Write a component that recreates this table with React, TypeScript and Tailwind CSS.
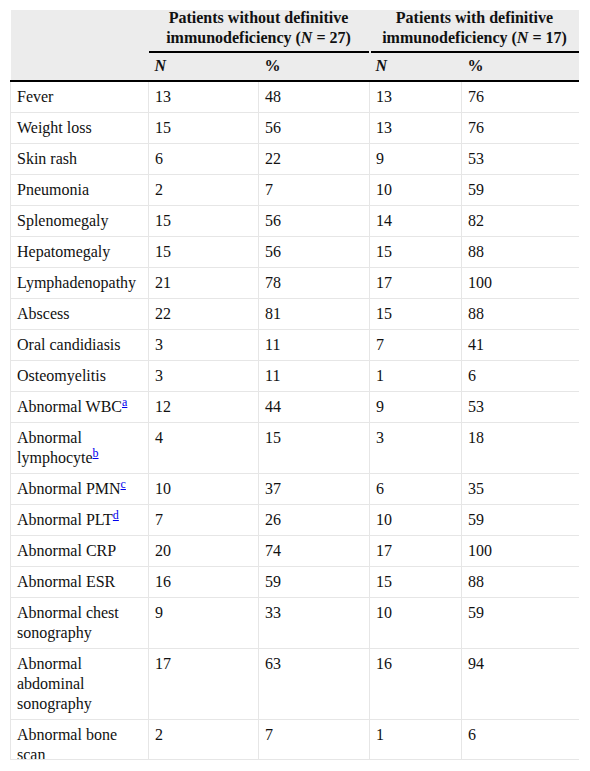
const rows: [string, string | null, string, string, string, string][] = [
  ["Fever", null, "13", "48", "13", "76"],
  ["Weight loss", null, "15", "56", "13", "76"],
  ["Skin rash", null, "6", "22", "9", "53"],
  ["Pneumonia", null, "2", "7", "10", "59"],
  ["Splenomegaly", null, "15", "56", "14", "82"],
  ["Hepatomegaly", null, "15", "56", "15", "88"],
  ["Lymphadenopathy", null, "21", "78", "17", "100"],
  ["Abscess", null, "22", "81", "15", "88"],
  ["Oral candidiasis", null, "3", "11", "7", "41"],
  ["Osteomyelitis", null, "3", "11", "1", "6"],
  ["Abnormal WBC", "a", "12", "44", "9", "53"],
  ["Abnormal lymphocyte", "b", "4", "15", "3", "18"],
  ["Abnormal PMN", "c", "10", "37", "6", "35"],
  ["Abnormal PLT", "d", "7", "26", "10", "59"],
  ["Abnormal CRP", null, "20", "74", "17", "100"],
  ["Abnormal ESR", null, "16", "59", "15", "88"],
  ["Abnormal chest sonography", null, "9", "33", "10", "59"],
  ["Abnormal abdominal sonography", null, "17", "63", "16", "94"],
  ["Abnormal bone scan", null, "2", "7", "1", "6"],
];

const td = "border border-t-0 border-[#e6e6e6] px-[6px] py-[5px] align-top";
const subTh = "px-[6px] pt-[3px] pb-[4px] text-left font-bold border-b-2 border-black";

export default function App() {
  return (
    <div className="bg-white min-h-[771px] pt-[10px] pl-[10px] font-['Liberation_Serif',serif] text-[16px] leading-[20px] text-[#111]">
      <div className="w-[569px] h-[750px] overflow-hidden border-b border-[#e6e6e6]">
        <table className="w-[569px] table-fixed border-collapse">
          <colgroup>
            <col className="w-[138px]" />
            <col className="w-[110px]" />
            <col className="w-[111px]" />
            <col className="w-[92px]" />
            <col className="w-[118px]" />
          </colgroup>
          <thead className="bg-[#ececec]">
            <tr>
              <th rowSpan={2} className="border-b-2 border-black"></th>
              <th colSpan={2} className="p-0 font-bold text-center align-top">
                <div className="-mt-[2px] pb-[3px] border-b-2 border-black mr-[1px]">
                  Patients without definitive immunodeficiency (<i>N</i> = 27)
                </div>
              </th>
              <th colSpan={2} className="p-0 font-bold text-center align-top">
                <div className="-mt-[2px] pb-[3px] border-b-2 border-black ml-[1px] mr-[1px]">
                  Patients with definitive immunodeficiency (<i>N</i> = 17)
                </div>
              </th>
            </tr>
            <tr>
              <th className={`${subTh} italic`}>N</th>
              <th className={subTh}>%</th>
              <th className={`${subTh} italic`}>N</th>
              <th className={subTh}>%</th>
            </tr>
          </thead>
          <tbody>
            {rows.map(([label, note, a, b, c, d]) => (
              <tr key={label}>
                <td className={td}>
                  {label}
                  {note && (
                    <sup className="text-[12px] text-[#0000ee] underline">{note}</sup>
                  )}
                </td>
                <td className={td}>{a}</td>
                <td className={td}>{b}</td>
                <td className={td}>{c}</td>
                <td className={td}>{d}</td>
              </tr>
            ))}
          </tbody>
        </table>
      </div>
    </div>
  );
}
